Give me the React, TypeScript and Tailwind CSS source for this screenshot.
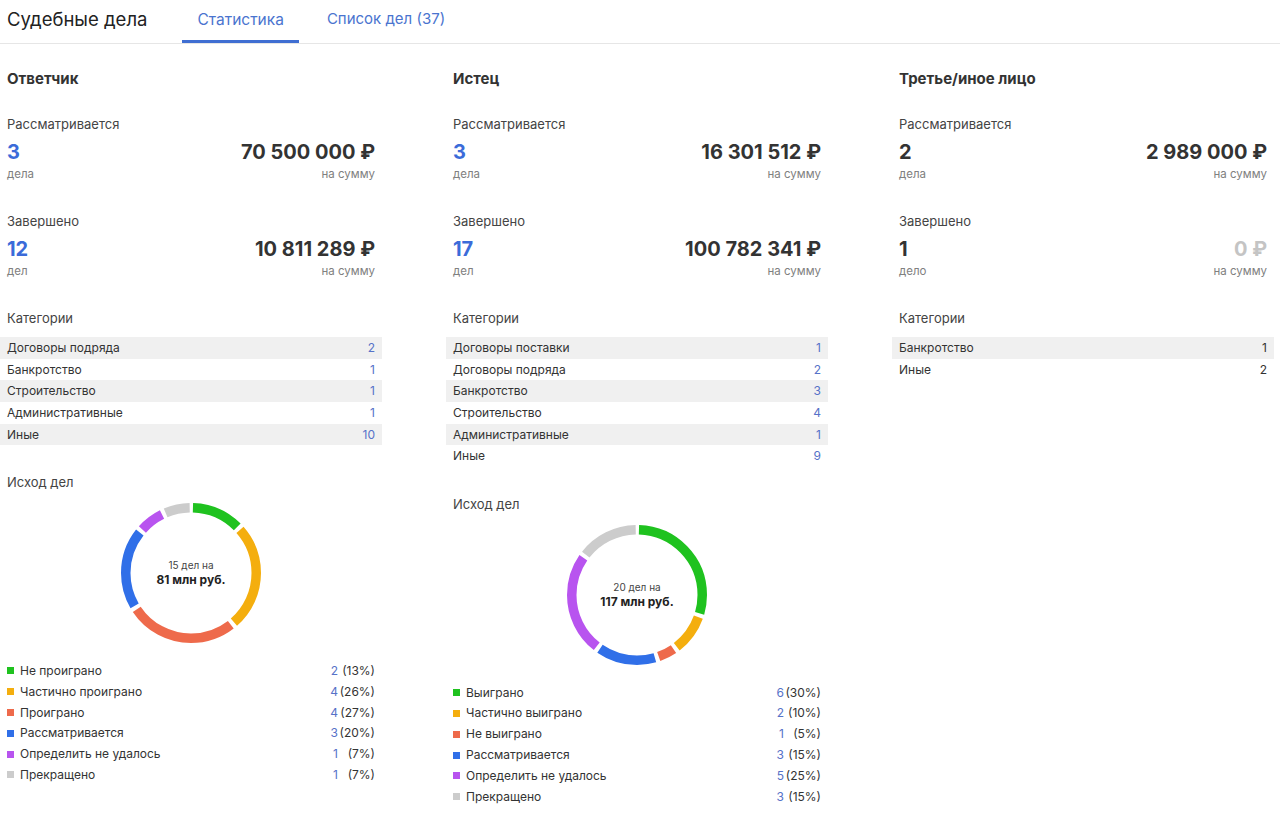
import React from "react";

type Seg = { label: string; count: number; pct: number; color: string };

const COLORS = {
  green: "#1fc21f",
  orange: "#f4ae0e",
  red: "#ee6a4b",
  blue: "#306fe8",
  purple: "#b854ef",
  gray: "#cccccc",
};

function Donut({ segs, line1, line2 }: { segs: Seg[]; line1: string; line2: string }) {
  const size = 140;
  const sw = 9.5;
  const r = (size - sw) / 2;
  const c = 2 * Math.PI * r;
  const gap = 4;
  let cum = 0;
  return (
    <div className="relative w-[140px] h-[140px]">
      <svg width={size} height={size} viewBox={`0 0 ${size} ${size}`}>
        <g transform={`rotate(-90 ${size / 2} ${size / 2})`}>
          {segs.map((s, i) => {
            const len = (s.pct / 100) * c;
            const off = cum;
            cum += len;
            return (
              <circle
                key={i}
                cx={size / 2}
                cy={size / 2}
                r={r}
                fill="none"
                stroke={s.color}
                strokeWidth={sw}
                strokeDasharray={`${Math.max(len - gap, 0)} ${c}`}
                strokeDashoffset={-(off + gap / 2)}
              />
            );
          })}
        </g>
      </svg>
      <div className="absolute inset-0 flex flex-col items-center justify-center">
        <div className="text-[10px] leading-[13px] text-[#444]">{line1}</div>
        <div className="text-[12px] leading-[15px] font-bold text-[#222]">{line2}</div>
      </div>
    </div>
  );
}

type Col = {
  title: string;
  active: { n: string; word: string; sum: string };
  done: { n: string; word: string; sum: string; zero?: boolean };
  blue: boolean;
  cats: [string, number][];
  outcome?: { segs: Seg[]; line1: string; line2: string };
};

const cols: Col[] = [
  {
    title: "Ответчик",
    active: { n: "3", word: "дела", sum: "70 500 000 ₽" },
    done: { n: "12", word: "дел", sum: "10 811 289 ₽" },
    blue: true,
    cats: [
      ["Договоры подряда", 2],
      ["Банкротство", 1],
      ["Строительство", 1],
      ["Административные", 1],
      ["Иные", 10],
    ],
    outcome: {
      line1: "15 дел на",
      line2: "81 млн руб.",
      segs: [
        { label: "Не проиграно", count: 2, pct: 13, color: COLORS.green },
        { label: "Частично проиграно", count: 4, pct: 26, color: COLORS.orange },
        { label: "Проиграно", count: 4, pct: 27, color: COLORS.red },
        { label: "Рассматривается", count: 3, pct: 20, color: COLORS.blue },
        { label: "Определить не удалось", count: 1, pct: 7, color: COLORS.purple },
        { label: "Прекращено", count: 1, pct: 7, color: COLORS.gray },
      ],
    },
  },
  {
    title: "Истец",
    active: { n: "3", word: "дела", sum: "16 301 512 ₽" },
    done: { n: "17", word: "дел", sum: "100 782 341 ₽" },
    blue: true,
    cats: [
      ["Договоры поставки", 1],
      ["Договоры подряда", 2],
      ["Банкротство", 3],
      ["Строительство", 4],
      ["Административные", 1],
      ["Иные", 9],
    ],
    outcome: {
      line1: "20 дел на",
      line2: "117 млн руб.",
      segs: [
        { label: "Выиграно", count: 6, pct: 30, color: COLORS.green },
        { label: "Частично выиграно", count: 2, pct: 10, color: COLORS.orange },
        { label: "Не выиграно", count: 1, pct: 5, color: COLORS.red },
        { label: "Рассматривается", count: 3, pct: 15, color: COLORS.blue },
        { label: "Определить не удалось", count: 5, pct: 25, color: COLORS.purple },
        { label: "Прекращено", count: 3, pct: 15, color: COLORS.gray },
      ],
    },
  },
  {
    title: "Третье/иное лицо",
    active: { n: "2", word: "дела", sum: "2 989 000 ₽" },
    done: { n: "1", word: "дело", sum: "0 ₽", zero: true },
    blue: false,
    cats: [
      ["Банкротство", 1],
      ["Иные", 2],
    ],
  },
];

function Stat({
  label,
  n,
  word,
  sum,
  blue,
  zero,
  mt,
}: {
  label: string;
  n: string;
  word: string;
  sum: string;
  blue: boolean;
  zero?: boolean;
  mt: string;
}) {
  return (
    <div className={`px-[7px] ${mt}`}>
      <div className="text-[13px] leading-[18px] text-[#444]">{label}</div>
      <div className="mt-[7px] flex items-start justify-between">
        <div>
          <div
            className={`text-[20px] leading-[24px] font-bold ${blue ? "text-[#3b6bd9]" : "text-[#333]"}`}
          >
            {n}
          </div>
          <div className="mt-[3px] text-[11.5px] leading-[14px] text-[#808080]">{word}</div>
        </div>
        <div className="text-right">
          <div
            className={`text-[20px] leading-[24px] font-bold ${zero ? "text-[#c4c4c4]" : "text-[#333]"}`}
          >
            {sum}
          </div>
          <div className="mt-[3px] text-[11.5px] leading-[14px] text-[#808080]">на сумму</div>
        </div>
      </div>
    </div>
  );
}

function Column({ col }: { col: Col }) {
  return (
    <div className="flex flex-col">
      <div className="px-[7px] mt-[25px] text-[15px] leading-[20px] font-bold text-[#333]">{col.title}</div>
      <Stat label="Рассматривается" {...col.active} blue={col.blue} mt="mt-[26px]" />
      <Stat label="Завершено" {...col.done} blue={col.blue} mt="mt-[31px]" />
      <div className="px-[7px] mt-[31px] text-[13px] leading-[18px] text-[#444]">Категории</div>
      <div className="mt-[10px] flex flex-col">
        {col.cats.map(([name, v], i) => (
          <div
            key={name}
            className={`h-[21.7px] px-[7px] flex items-center justify-between text-[12px] ${
              i % 2 === 0 ? "bg-[#f0f0f0]" : "bg-white"
            }`}
          >
            <span className="text-[#333]">{name}</span>
            <span className={col.blue ? "text-[#5672c8]" : "text-[#333]"}>{v}</span>
          </div>
        ))}
      </div>
      {col.outcome && (
        <>
          <div className="px-[7px] mt-[27.5px] text-[13px] leading-[18px] text-[#444]">Исход дел</div>
          <div className="mt-[12px] flex justify-center">
            <Donut segs={col.outcome.segs} line1={col.outcome.line1} line2={col.outcome.line2} />
          </div>
          <div className="mt-[17.6px] flex flex-col">
            {col.outcome.segs.map((s) => (
              <div key={s.label} className="h-[20.8px] px-[7px] flex items-center text-[12px]">
                <span className="w-[7px] h-[7px] shrink-0" style={{ backgroundColor: s.color }} />
                <span className="ml-[6px] text-[#333] flex-1">{s.label}</span>
                <span className="text-[#5672c8]">{s.count}</span>
                <span className="w-[37px] text-right text-[#333]">({s.pct}%)</span>
              </div>
            ))}
          </div>
        </>
      )}
    </div>
  );
}

export default function App() {
  return (
    <div
      className="w-[1280px] min-h-[814px] bg-white"
      style={{ fontFamily: "Inter, 'Noto Sans', sans-serif" }}
    >
      <div className="h-[44px] border-b border-[#e6e6e6] flex items-end">
        <div className="h-[43px] pb-[4px] flex items-center pl-[7px] text-[18.5px] text-[#222]">Судебные дела</div>
        <div className="ml-[35px] flex gap-[13px] h-[43px]">
          <div className="relative px-[15px] pb-[4px] flex items-center text-[15.5px] text-[#4a74cf]">
            Статистика
            <div className="absolute left-0 right-0 bottom-0 h-[3px] bg-[#3f6ed2]" />
          </div>
          <div className="px-[15px] pb-[4px] flex items-center text-[15px] text-[#4a74cf]">Список дел (37)</div>
        </div>
      </div>
      <div className="grid grid-cols-[382px_382px_382px] gap-x-[64px] pb-[20px]">
        {cols.map((c) => (
          <Column key={c.title} col={c} />
        ))}
      </div>
    </div>
  );
}
